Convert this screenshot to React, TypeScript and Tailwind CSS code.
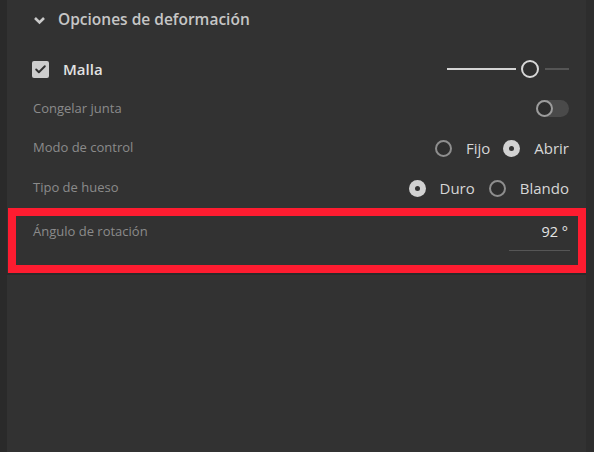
import { Check } from 'lucide-react'

const labelCls = "text-[13px] text-[#8b8b8b]"
const optionCls = "text-[15px] text-[#d6d6d6]"

function Radio({ on }: { on?: boolean }) {
  if (on) {
    return (
      <span className="shrink-0 w-[17px] h-[17px] rounded-full bg-[#d2d2d2] flex items-center justify-center">
        <span className="w-[5px] h-[5px] rounded-full bg-[#333]" />
      </span>
    )
  }
  return <span className="shrink-0 block w-[17px] h-[17px] rounded-full border-2 border-[#8e8e8e] bg-[#2e2e2e]" />
}

function Row({ label, children, h = "h-[40px]" }: { label: string; children?: React.ReactNode; h?: string }) {
  return (
    <div className={`${h} flex items-center justify-between pl-[26px] pr-[17px]`}>
      <span className={labelCls}>{label}</span>
      <div className="flex items-center">{children}</div>
    </div>
  )
}

export default function App() {
  return (
    <div className="w-[594px] h-[452px] flex bg-[#2b2b2b] overflow-hidden" style={{ fontFamily: '"Open Sans", "Noto Sans", sans-serif' }}>
      <div className="w-[7px] bg-[#2a2a2a]" />
      <div className="w-[579px] bg-[#323232] flex flex-col">
        {/* header */}
        <div className="h-[40px] flex items-center pl-[26px]">
          <svg width="13" height="9" viewBox="0 0 13 9">
            <path d="M2 2 L6.5 6.5 L11 2" stroke="#cacaca" strokeWidth="2.6" fill="none" />
          </svg>
          <span className="ml-[12px] text-[15.5px] font-semibold text-[#c6c6c6]">Opciones de deformación</span>
        </div>

        <div className="mt-[9px] h-[40px] flex items-center justify-between pl-[25px] pr-[17px]">
          <div className="flex items-center">
            <span className="w-[17px] h-[17px] rounded-[2px] bg-[#cdcdcd] flex items-center justify-center">
              <Check size={13} strokeWidth={3.5} color="#303030" />
            </span>
            <span className="ml-[14px] text-[15px] font-semibold text-[#e2e2e2]">Malla</span>
          </div>
          <div className="flex items-center">
            <span className="w-[69px] h-[2px] bg-[#d4d4d4]" />
            <span className="ml-[5px] w-[18px] h-[18px] rounded-full border-2 border-[#d8d8d8] bg-[#2f2f2f]" />
            <span className="ml-[6px] w-[24px] h-[2px] bg-[#555555]" />
          </div>
        </div>

        <Row label="Congelar junta" h="h-[39px]">
          <span className="w-[33px] h-[17px] rounded-full bg-[#4a4a4a] flex items-center">
            <span className="w-[17px] h-[17px] rounded-full border-2 border-[#9c9c9c] bg-[#2c2c2c]" />
          </span>
        </Row>

        <Row label="Modo de control">
          <Radio />
          <span className={`${optionCls} ml-[14px]`}>Fijo</span>
          <span className="ml-[13px]"><Radio on /></span>
          <span className={`${optionCls} ml-[14px]`}>Abrir</span>
        </Row>

        <Row label="Tipo de hueso">
          <Radio on />
          <span className={`${optionCls} ml-[14px]`}>Duro</span>
          <span className="ml-[14px]"><Radio /></span>
          <span className={`${optionCls} ml-[14px]`}>Blando</span>
        </Row>

        {/* highlighted row */}
        <div className="ml-[1px] h-[65px] border-8 border-[#fe1c30] flex justify-between pl-[17px] pr-[8px]">
          <span className={`${labelCls} mt-[6px]`}>Ángulo de rotación</span>
          <div className="mt-[5px] w-[61px] h-[30px] border-b border-[#565656] flex justify-end pr-[2px]">
            <span className="text-[14.5px] text-[#e4e4e4]">92 °</span>
          </div>
        </div>

        <div className="h-[2px] bg-[#2a2a2a]" />
        <div className="flex-1" />
      </div>
      <div className="flex-1 bg-[#2d2d2d]" />
    </div>
  )
}
